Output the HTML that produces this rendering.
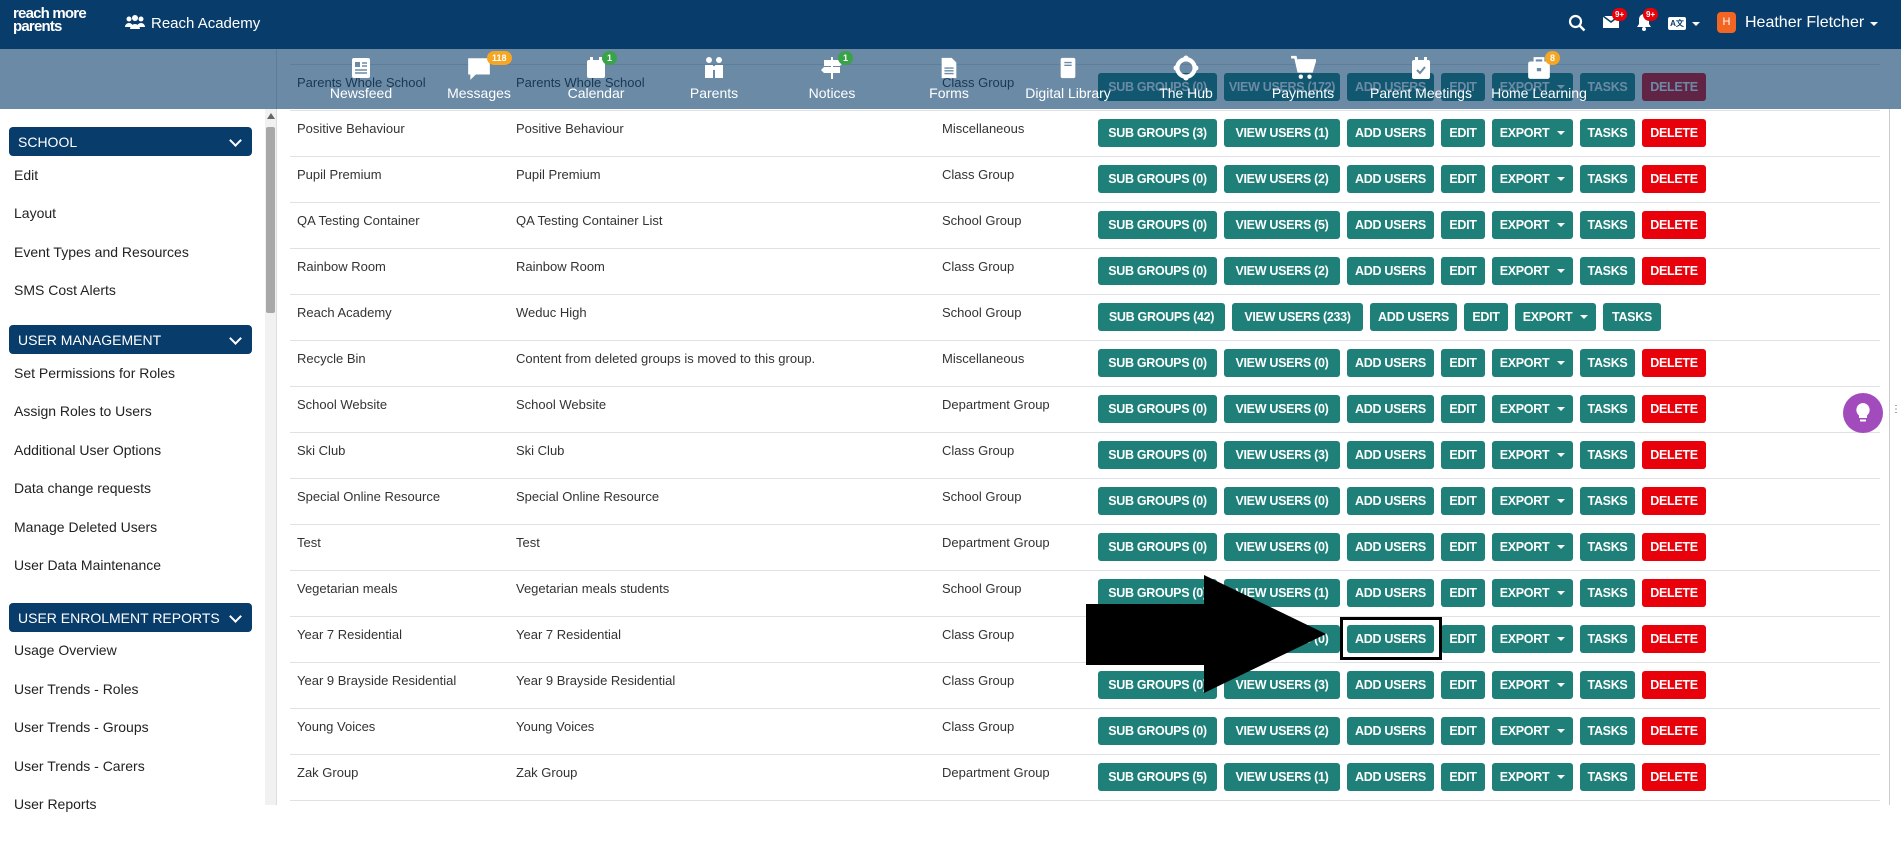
<!DOCTYPE html>
<html><head><meta charset="utf-8"><style>
*{box-sizing:border-box;margin:0;padding:0}
body{width:1901px;height:805px;overflow:hidden;font-family:"Liberation Sans",sans-serif;background:#fff;position:relative}
#hdr{position:absolute;left:0;top:0;width:1901px;height:49px;background:#083c6a;color:#fff}
#side{position:absolute;left:0;top:49px;width:277px;height:756px;background:#fff;border-right:1px solid #ddd}
.sh{position:absolute;left:9px;width:243px;height:29px;background:#083c6a;border-radius:4px;color:#fff;font-size:14px;padding:7px 0 0 9px}
.sh:after{content:"";position:absolute;right:12px;top:9px;width:7px;height:7px;border-right:2px solid #fff;border-bottom:2px solid #fff;transform:rotate(45deg)}
.si{position:absolute;left:14px;font-size:14px;color:#222}
#main{position:absolute;left:290px;top:64px;width:1590px}
.r{height:46px;border-top:1px solid #dee2e6;position:relative;font-size:13px;color:#333}
.r span{position:absolute;top:10px}
.c1{left:7px}.c2{left:226px}.c3{left:652px}
.b{position:absolute;left:808px;top:8px;display:flex;gap:7px}
.b i{font-style:normal;height:28px;line-height:28px;padding:0;text-align:center;background:#1e8079;color:#fff;font-weight:bold;font-size:12.5px;border-radius:3px;letter-spacing:-0.3px;white-space:nowrap;overflow:hidden}
.b i:nth-child(1){width:119px}.b i:nth-child(2){width:116px}.b i:nth-child(3){width:87px}.b i:nth-child(4){width:44px}.b i:nth-child(5){width:81px}.b i:nth-child(6){width:55px}.b i:nth-child(7){width:64px}
.b.w i:nth-child(1){width:127px}.b.w i:nth-child(2){width:131px}.b.w i:nth-child(6){width:58px}
.b i.d{background:#e8000b}
.b i.e:after{content:"";display:inline-block;margin-left:8px;border:4px solid transparent;border-top-color:#fff;border-bottom:0;vertical-align:2px}
#ov{position:absolute;left:0;top:49px;width:1901px;height:60px;background:rgba(8,60,106,0.6)}
.n{position:absolute;top:55px;width:120px;text-align:center;color:#fff;font-size:14px}
.n svg{display:block;margin:0 auto 4px;height:26px}
.bd{position:absolute;top:-4px;left:66px;font-size:9px;color:#fff;border-radius:9px;padding:2px 5px;font-weight:bold}
</style></head><body>

<div id="main">
<div class="r"><span class="c1">Parents Whole School</span><span class="c2">Parents Whole School</span><span class="c3">Class Group</span><div class="b"><i>SUB GROUPS (0)</i><i>VIEW USERS (172)</i><i>ADD USERS</i><i>EDIT</i><i class="e">EXPORT</i><i>TASKS</i><i class="d">DELETE</i></div></div>
<div class="r"><span class="c1">Positive Behaviour</span><span class="c2">Positive Behaviour</span><span class="c3">Miscellaneous</span><div class="b"><i>SUB GROUPS (3)</i><i>VIEW USERS (1)</i><i>ADD USERS</i><i>EDIT</i><i class="e">EXPORT</i><i>TASKS</i><i class="d">DELETE</i></div></div>
<div class="r"><span class="c1">Pupil Premium</span><span class="c2">Pupil Premium</span><span class="c3">Class Group</span><div class="b"><i>SUB GROUPS (0)</i><i>VIEW USERS (2)</i><i>ADD USERS</i><i>EDIT</i><i class="e">EXPORT</i><i>TASKS</i><i class="d">DELETE</i></div></div>
<div class="r"><span class="c1">QA Testing Container</span><span class="c2">QA Testing Container List</span><span class="c3">School Group</span><div class="b"><i>SUB GROUPS (0)</i><i>VIEW USERS (5)</i><i>ADD USERS</i><i>EDIT</i><i class="e">EXPORT</i><i>TASKS</i><i class="d">DELETE</i></div></div>
<div class="r"><span class="c1">Rainbow Room</span><span class="c2">Rainbow Room</span><span class="c3">Class Group</span><div class="b"><i>SUB GROUPS (0)</i><i>VIEW USERS (2)</i><i>ADD USERS</i><i>EDIT</i><i class="e">EXPORT</i><i>TASKS</i><i class="d">DELETE</i></div></div>
<div class="r"><span class="c1">Reach Academy</span><span class="c2">Weduc High</span><span class="c3">School Group</span><div class="b w"><i>SUB GROUPS (42)</i><i>VIEW USERS (233)</i><i>ADD USERS</i><i>EDIT</i><i class="e">EXPORT</i><i>TASKS</i></div></div>
<div class="r"><span class="c1">Recycle Bin</span><span class="c2">Content from deleted groups is moved to this group.</span><span class="c3">Miscellaneous</span><div class="b"><i>SUB GROUPS (0)</i><i>VIEW USERS (0)</i><i>ADD USERS</i><i>EDIT</i><i class="e">EXPORT</i><i>TASKS</i><i class="d">DELETE</i></div></div>
<div class="r"><span class="c1">School Website</span><span class="c2">School Website</span><span class="c3">Department Group</span><div class="b"><i>SUB GROUPS (0)</i><i>VIEW USERS (0)</i><i>ADD USERS</i><i>EDIT</i><i class="e">EXPORT</i><i>TASKS</i><i class="d">DELETE</i></div></div>
<div class="r"><span class="c1">Ski Club</span><span class="c2">Ski Club</span><span class="c3">Class Group</span><div class="b"><i>SUB GROUPS (0)</i><i>VIEW USERS (3)</i><i>ADD USERS</i><i>EDIT</i><i class="e">EXPORT</i><i>TASKS</i><i class="d">DELETE</i></div></div>
<div class="r"><span class="c1">Special Online Resource</span><span class="c2">Special Online Resource</span><span class="c3">School Group</span><div class="b"><i>SUB GROUPS (0)</i><i>VIEW USERS (0)</i><i>ADD USERS</i><i>EDIT</i><i class="e">EXPORT</i><i>TASKS</i><i class="d">DELETE</i></div></div>
<div class="r"><span class="c1">Test</span><span class="c2">Test</span><span class="c3">Department Group</span><div class="b"><i>SUB GROUPS (0)</i><i>VIEW USERS (0)</i><i>ADD USERS</i><i>EDIT</i><i class="e">EXPORT</i><i>TASKS</i><i class="d">DELETE</i></div></div>
<div class="r"><span class="c1">Vegetarian meals</span><span class="c2">Vegetarian meals students</span><span class="c3">School Group</span><div class="b"><i>SUB GROUPS (0)</i><i>VIEW USERS (1)</i><i>ADD USERS</i><i>EDIT</i><i class="e">EXPORT</i><i>TASKS</i><i class="d">DELETE</i></div></div>
<div class="r"><span class="c1">Year 7 Residential</span><span class="c2">Year 7 Residential</span><span class="c3">Class Group</span><div class="b"><i>SUB GROUPS (0)</i><i>VIEW USERS (0)</i><i>ADD USERS</i><i>EDIT</i><i class="e">EXPORT</i><i>TASKS</i><i class="d">DELETE</i></div></div>
<div class="r"><span class="c1">Year 9 Brayside Residential</span><span class="c2">Year 9 Brayside Residential</span><span class="c3">Class Group</span><div class="b"><i>SUB GROUPS (0)</i><i>VIEW USERS (3)</i><i>ADD USERS</i><i>EDIT</i><i class="e">EXPORT</i><i>TASKS</i><i class="d">DELETE</i></div></div>
<div class="r"><span class="c1">Young Voices</span><span class="c2">Young Voices</span><span class="c3">Class Group</span><div class="b"><i>SUB GROUPS (0)</i><i>VIEW USERS (2)</i><i>ADD USERS</i><i>EDIT</i><i class="e">EXPORT</i><i>TASKS</i><i class="d">DELETE</i></div></div>
<div class="r"><span class="c1">Zak Group</span><span class="c2">Zak Group</span><span class="c3">Department Group</span><div class="b"><i>SUB GROUPS (5)</i><i>VIEW USERS (1)</i><i>ADD USERS</i><i>EDIT</i><i class="e">EXPORT</i><i>TASKS</i><i class="d">DELETE</i></div></div>
<div class="r"></div>
</div>

<div style="position:absolute;left:1889px;top:109px;width:1px;height:696px;background:#ccc"></div>

<div id="side">
<div style="position:absolute;left:265px;top:60px;width:11px;height:696px;background:#f1f1f1"></div>
<div style="position:absolute;left:266px;top:78px;width:9px;height:186px;background:#a8a8a8;border-radius:2px"></div>
<div style="position:absolute;left:267px;top:64px;border:4px solid transparent;border-bottom:6px solid #666;border-top:0"></div>
<div class="sh" style="top:78px">SCHOOL</div>
<div class="si" style="top:118px">Edit</div>
<div class="si" style="top:156px">Layout</div>
<div class="si" style="top:195px">Event Types and Resources</div>
<div class="si" style="top:233px">SMS Cost Alerts</div>
<div class="sh" style="top:276px">USER MANAGEMENT</div>
<div class="si" style="top:316px">Set Permissions for Roles</div>
<div class="si" style="top:354px">Assign Roles to Users</div>
<div class="si" style="top:393px">Additional User Options</div>
<div class="si" style="top:431px">Data change requests</div>
<div class="si" style="top:470px">Manage Deleted Users</div>
<div class="si" style="top:508px">User Data Maintenance</div>
<div class="sh" style="top:554px">USER ENROLMENT REPORTS</div>
<div class="si" style="top:593px">Usage Overview</div>
<div class="si" style="top:632px">User Trends - Roles</div>
<div class="si" style="top:670px">User Trends - Groups</div>
<div class="si" style="top:709px">User Trends - Carers</div>
<div class="si" style="top:747px">User Reports</div>
</div>

<div id="ov"></div>

<div class="n" style="left:301px"><svg viewBox="0 0 24 24" width="24"><rect x="3" y="2" width="18" height="20" rx="2" fill="#fff"/><rect x="6" y="6" width="5" height="5" fill="#6b8aa6"/><path d="M13 7h5M13 10h5M6 14h12M6 17h12" stroke="#6b8aa6" stroke-width="1.5"/></svg>Newsfeed</div>
<div class="n" style="left:419px"><svg viewBox="0 0 24 24" width="26"><path d="M2 3h20v15H9l-5 5v-5H2z" fill="#fff"/></svg>Messages<span class="bd" style="background:#f5a623;left:68px">118</span></div>
<div class="n" style="left:536px"><svg viewBox="0 0 24 24" width="24"><rect x="3" y="4" width="18" height="18" rx="2" fill="#fff"/><rect x="6" y="1" width="3" height="5" fill="#fff"/><rect x="15" y="1" width="3" height="5" fill="#fff"/></svg>Calendar<span class="bd" style="background:#3aa34a">1</span></div>
<div class="n" style="left:654px"><svg viewBox="0 0 24 24" width="24"><circle cx="7" cy="4" r="3" fill="#fff"/><circle cx="17" cy="4" r="3" fill="#fff"/><path d="M3 9h8v13H3zM13 9h8v13h-8z" fill="#fff"/><circle cx="12" cy="12" r="2" fill="#fff"/></svg>Parents</div>
<div class="n" style="left:772px"><svg viewBox="0 0 24 24" width="24"><path d="M11 1h2v22h-2z M4 4h16l3 3-3 3H4zM1 14l3-3h16v6H4z" fill="#fff"/></svg>Notices<span class="bd" style="background:#3aa34a">1</span></div>
<div class="n" style="left:889px"><svg viewBox="0 0 24 24" width="22"><path d="M4 1h11l5 5v17H4z" fill="#fff"/><path d="M7 12h10M7 15h10M7 18h10" stroke="#6b8aa6" stroke-width="1.5"/></svg>Forms</div>
<div class="n" style="left:1008px"><svg viewBox="0 0 24 24" width="22"><rect x="4" y="1" width="16" height="22" rx="2" fill="#fff"/><path d="M8 6h8M8 9h8" stroke="#6b8aa6" stroke-width="1.5"/></svg>Digital Library</div>
<div class="n" style="left:1126px"><svg viewBox="0 0 24 24" width="26"><circle cx="12" cy="12" r="8" fill="none" stroke="#fff" stroke-width="4"/><circle cx="12" cy="3" r="2.5" fill="#fff"/><circle cx="12" cy="21" r="2.5" fill="#fff"/><circle cx="3" cy="12" r="2.5" fill="#fff"/><circle cx="21" cy="12" r="2.5" fill="#fff"/></svg>The Hub</div>
<div class="n" style="left:1243px"><svg viewBox="0 0 24 24" width="26"><path d="M1 2h4l3 13h12l3-10H7" fill="none" stroke="#fff" stroke-width="2.5"/><path d="M7 6h15l-3 8H9z" fill="#fff"/><circle cx="10" cy="20" r="2" fill="#fff"/><circle cx="18" cy="20" r="2" fill="#fff"/></svg>Payments</div>
<div class="n" style="left:1361px"><svg viewBox="0 0 24 24" width="24"><rect x="3" y="4" width="18" height="19" rx="2" fill="#fff"/><rect x="6" y="1" width="3" height="5" fill="#fff"/><rect x="15" y="1" width="3" height="5" fill="#fff"/><path d="M8 14l3 3 5-6" fill="none" stroke="#6b8aa6" stroke-width="2"/></svg>Parent Meetings</div>
<div class="n" style="left:1479px"><svg viewBox="0 0 24 24" width="26"><path d="M8 6V3h8v3" fill="none" stroke="#fff" stroke-width="2"/><rect x="2" y="6" width="20" height="16" rx="2" fill="#fff"/><rect x="10" y="12" width="4" height="3" fill="#6b8aa6"/></svg>Home Learning<span class="bd" style="background:#f5a623">8</span></div>

<div id="hdr">
<div style="position:absolute;left:13px;top:7px;font-size:15px;line-height:13px;font-weight:bold;letter-spacing:-0.8px">reach more<br>parents</div>
<svg style="position:absolute;left:125px;top:15px" width="20" height="16" viewBox="0 0 20 16"><circle cx="4" cy="4" r="2.5" fill="#fff"/><circle cx="10" cy="3" r="3" fill="#fff"/><circle cx="16" cy="4" r="2.5" fill="#fff"/><path d="M0 12a4 4 0 0 1 8 0zM5 14a5 5 0 0 1 10 0zM12 12a4 4 0 0 1 8 0z" fill="#fff"/></svg>
<div style="position:absolute;left:151px;top:15px;font-size:15px">Reach Academy</div>
<svg style="position:absolute;left:1568px;top:14px" width="18" height="18" viewBox="0 0 18 18"><circle cx="7.5" cy="7.5" r="5.5" fill="none" stroke="#fff" stroke-width="2.2"/><path d="M11.5 11.5l5 5" stroke="#fff" stroke-width="2.5"/></svg>
<svg style="position:absolute;left:1602px;top:15px" width="18" height="14" viewBox="0 0 18 14"><rect x="1" y="1" width="16" height="12" fill="#fff"/><path d="M1 1l8 6 8-6" fill="none" stroke="#083c6a" stroke-width="1.5"/></svg>
<div style="position:absolute;left:1612px;top:8px;background:#e8000b;border-radius:8px;font-size:8px;padding:2px 3px;font-weight:bold">9+</div>
<svg style="position:absolute;left:1636px;top:13px" width="16" height="18" viewBox="0 0 16 18"><path d="M8 1a5 5 0 0 1 5 5v5l2 3H1l2-3V6a5 5 0 0 1 5-5z" fill="#fff"/><circle cx="8" cy="16" r="2" fill="#fff"/></svg>
<div style="position:absolute;left:1643px;top:8px;background:#e8000b;border-radius:8px;font-size:8px;padding:2px 3px;font-weight:bold">9+</div>
<div style="position:absolute;left:1668px;top:17px;width:18px;height:13px;background:#fff;border-radius:2px;color:#083c6a;font-size:8px;font-weight:bold;text-align:center;line-height:13px">A文</div>
<div style="position:absolute;left:1692px;top:22px;border:4px solid transparent;border-top-color:#fff;border-bottom:0"></div>
<div style="position:absolute;left:1717px;top:12px;width:19px;height:21px;background:#f26522;border-radius:4px;font-size:11px;text-align:center;line-height:21px">H</div>
<div style="position:absolute;left:1745px;top:14px;font-size:16px">Heather Fletcher</div>
<div style="position:absolute;left:1870px;top:22px;border:4px solid transparent;border-top-color:#fff;border-bottom:0"></div>
</div>

<!-- arrow -->
<div style="position:absolute;left:1340px;top:617px;width:102px;height:43px;border:3px solid #000"></div>
<svg style="position:absolute;left:0;top:0" width="1901" height="805"><rect x="1086" y="604" width="125" height="61" fill="#000"/><polygon points="1204,575 1326,634 1204,693" fill="#000"/></svg>

<div style="position:absolute;left:1843px;top:393px;width:40px;height:40px;border-radius:50%;background:#a14bbd"></div>
<svg style="position:absolute;left:1853px;top:401px" width="20" height="24" viewBox="0 0 20 24"><path d="M10 2a7 7 0 0 1 4 12.5V17H6v-2.5A7 7 0 0 1 10 2z" fill="#fff"/><rect x="7" y="18.5" width="6" height="2" fill="#fff"/></svg>
<div style="position:absolute;left:1891px;top:407px;font-size:10px;color:#555;line-height:5px">⋮⋮</div>
</body></html>
